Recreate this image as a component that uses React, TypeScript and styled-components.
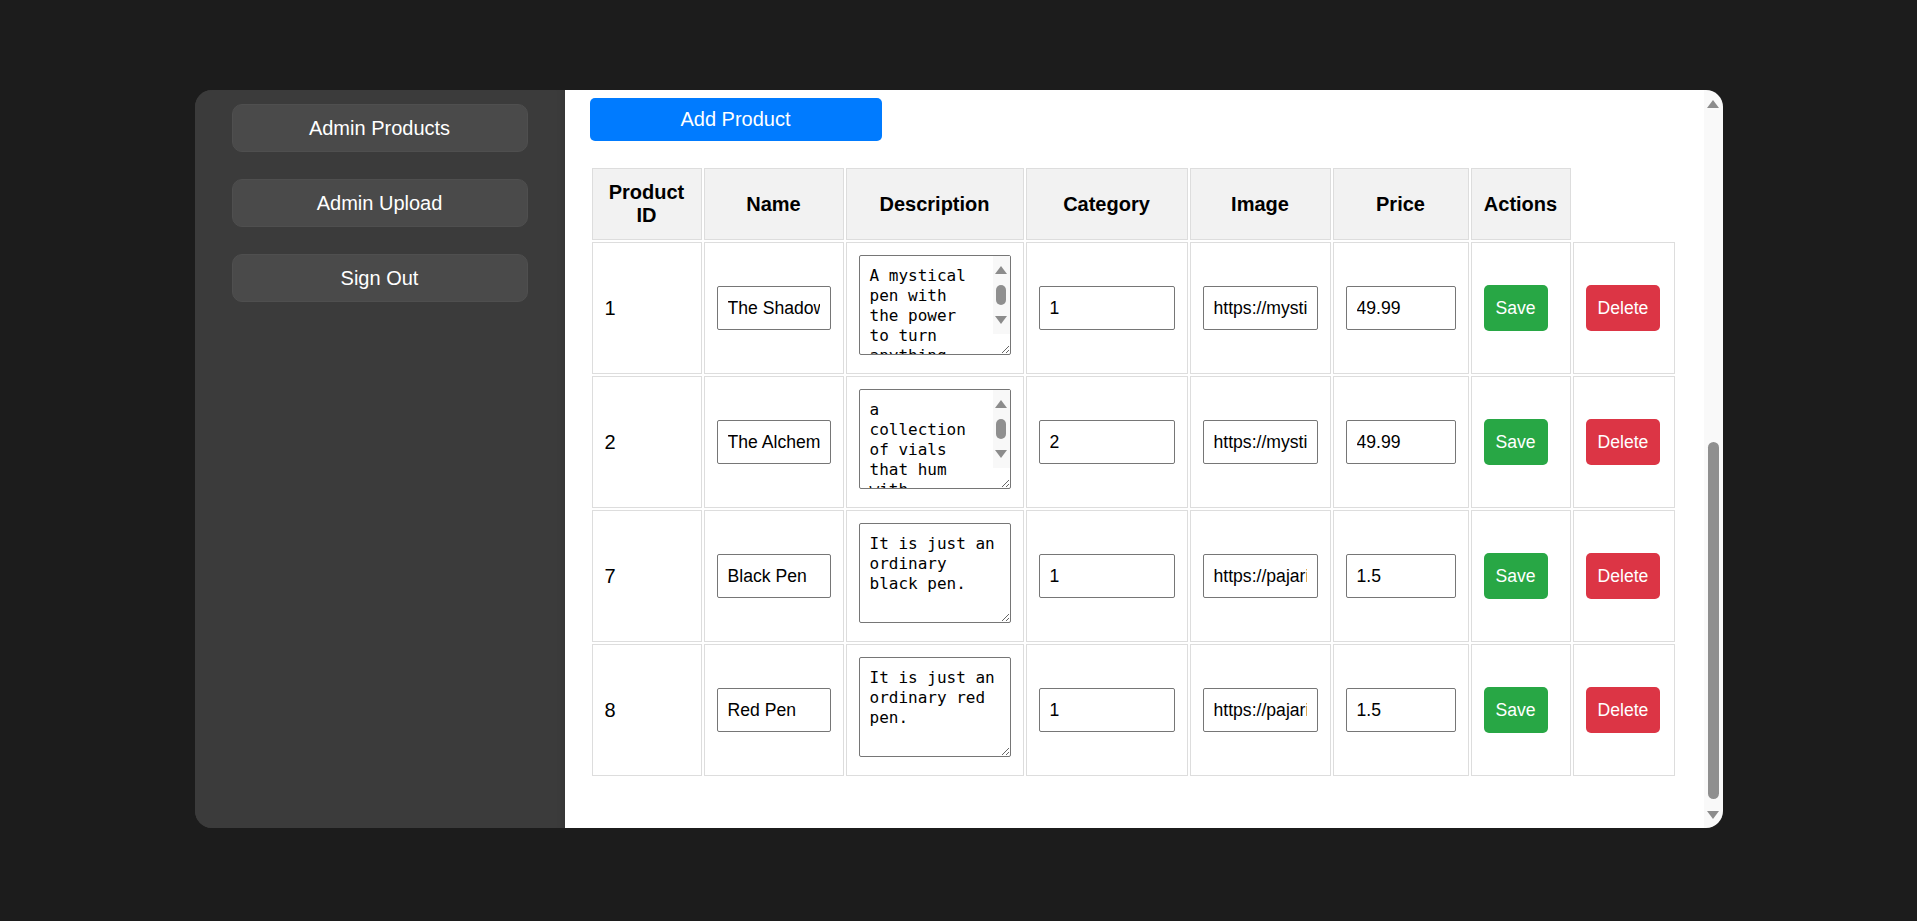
import React from "react";
import styled, { createGlobalStyle } from "styled-components";

const GlobalStyle = createGlobalStyle`
  html, body {
    margin: 0;
    padding: 0;
    background: #1c1c1c;
    font-family: "Liberation Sans", Arial, sans-serif;
  }
  * { box-sizing: border-box; }
`;

const Page = styled.div`
  height: 921px;
  display: flex;
  align-items: flex-start;
  justify-content: center;
  padding-top: 90px;
`;

const Shell = styled.div`
  width: 1528px;
  height: 738px;
  display: flex;
  border-radius: 17px;
  overflow: hidden;
  background: #3b3b3b;
`;

const Sidebar = styled.nav`
  width: 370px;
  flex-shrink: 0;
  background: #3b3b3b;
  display: flex;
  flex-direction: column;
  align-items: center;
  padding-top: 14px;
  gap: 27px;
  box-shadow: inset -8px 0 6px -6px rgba(0, 0, 0, 0.12);
`;

const NavButton = styled.button`
  width: 296px;
  height: 48px;
  background: #4a4a4a;
  border: 1px solid #4f4f4f;
  border-radius: 10px;
  color: #ffffff;
  font-family: "Liberation Sans", Arial, sans-serif;
  font-size: 20px;
  cursor: pointer;
`;

const Main = styled.main`
  flex: 1;
  background: #ffffff;
  overflow: hidden;
  padding: 8px 25px 0 25px;
`;

/* Drawn scrollbar of the main panel (scrolled to its end) */
const ScrollRail = styled.div`
  width: 19px;
  flex-shrink: 0;
  background: #f9f9f9;
  display: flex;
  flex-direction: column;
  align-items: center;
`;

const RailArrowBox = styled.div`
  height: 27px;
  width: 100%;
  display: flex;
  align-items: center;
  justify-content: center;
`;

const Triangle = styled.span<{ $dir: "up" | "down"; $w?: number; $h?: number }>`
  display: block;
  width: 0;
  height: 0;
  border-left: ${(p) => (p.$w ?? 12) / 2}px solid transparent;
  border-right: ${(p) => (p.$w ?? 12) / 2}px solid transparent;
  ${(p) =>
    p.$dir === "up"
      ? `border-bottom: ${p.$h ?? 8}px solid #8c8c8c;`
      : `border-top: ${p.$h ?? 8}px solid #8c8c8c;`}
`;

const RailTrack = styled.div`
  flex: 1;
  width: 100%;
  display: flex;
  flex-direction: column;
  align-items: center;
  padding-bottom: 2px;
`;

const RailThumb = styled.div`
  margin-top: auto;
  width: 11px;
  height: 357px;
  border-radius: 6px;
  background: #8f8f8f;
`;

const AddButton = styled.button`
  display: block;
  width: 292px;
  height: 43px;
  background: #007bff;
  color: #ffffff;
  border: none;
  border-radius: 5px;
  font-family: "Liberation Sans", Arial, sans-serif;
  font-size: 20px;
  margin-bottom: 25px;
  cursor: pointer;
`;

const Table = styled.table`
  border-collapse: separate;
  border-spacing: 2px;
  table-layout: fixed;
  width: 1087px;
  font-size: 20px;
  color: #000;
`;

const Th = styled.th`
  border: 1px solid #dddddd;
  background: #f2f2f2;
  padding: 12px;
  font-weight: bold;
  text-align: center;
  line-height: 23px;
`;

const Td = styled.td`
  border: 1px solid #dddddd;
  padding: 12px;
  text-align: left;
  vertical-align: middle;
`;

const TextInput = styled.input`
  width: 100%;
  height: 44px;
  padding: 10px;
  border: 1px solid #767676;
  border-radius: 2px;
  font-family: "Liberation Sans", Arial, sans-serif;
  font-size: 17.6px;
  color: #000;
  background: #fff;
`;

const DescBox = styled.div`
  position: relative;
`;

const DescArea = styled.textarea<{ $scrolls: boolean }>`
  width: 100%;
  height: 100px;
  padding: 10px ${(p) => (p.$scrolls ? 27 : 10)}px 10px 10px;
  border: 1px solid #767676;
  border-radius: 2px;
  font-family: "DejaVu Sans Mono", "Liberation Mono", monospace;
  font-size: 16px;
  line-height: 20px;
  color: #000;
  background: #fff;
  margin-bottom: 1px;
  overflow: hidden;
`;

/* Drawn scrollbar of an overflowing textarea */
const AreaRail = styled.div`
  position: absolute;
  top: 1px;
  right: 1px;
  width: 17px;
  height: 78px;
  background: #f8f8f8;
  display: flex;
  flex-direction: column;
  align-items: center;
  padding-top: 10px;
  pointer-events: none;
`;

const AreaThumb = styled.div`
  width: 10px;
  height: 20px;
  border-radius: 5px;
  background: #8f8f8f;
  margin: 11px 0;
`;

const ActionButton = styled.button<{ $variant: "save" | "delete" }>`
  height: 46px;
  padding: 0 12px;
  border: none;
  border-radius: 5px;
  color: #ffffff;
  font-family: "Liberation Sans", Arial, sans-serif;
  font-size: 17.6px;
  background: ${(p) => (p.$variant === "save" ? "#28a745" : "#dc3545")};
  cursor: pointer;
`;

type Product = {
  id: number;
  name: string;
  description: string;
  category: string;
  image: string;
  price: string;
  longText: boolean;
};

const products: Product[] = [
  {
    id: 1,
    name: "The Shadow Quill",
    description:
      "A mystical pen with the power to turn anything you write into reality.",
    category: "1",
    image: "https://mysticalshop.com/images/shadow-quill.png",
    price: "49.99",
    longText: true,
  },
  {
    id: 2,
    name: "The Alchemist's Vials",
    description:
      "a collection of vials that hum with ancient alchemical energy.",
    category: "2",
    image: "https://mysticalshop.com/images/alchemist-vials.png",
    price: "49.99",
    longText: true,
  },
  {
    id: 7,
    name: "Black Pen",
    description: "It is just an ordinary black pen.",
    category: "1",
    image: "https://pajaritoshop.com/images/black-pen.png",
    price: "1.5",
    longText: false,
  },
  {
    id: 8,
    name: "Red Pen",
    description: "It is just an ordinary red pen.",
    category: "1",
    image: "https://pajaritoshop.com/images/red-pen.png",
    price: "1.5",
    longText: false,
  },
];

const colWidths = [110, 140, 178, 162, 141, 136, 100, 102];

export default function App() {
  return (
    <>
      <GlobalStyle />
      <Page>
        <Shell>
          <Sidebar>
            <NavButton>Admin Products</NavButton>
            <NavButton>Admin Upload</NavButton>
            <NavButton>Sign Out</NavButton>
          </Sidebar>
          <Main>
            <AddButton>Add Product</AddButton>
            <Table>
              <colgroup>
                {colWidths.map((w, i) => (
                  <col key={i} style={{ width: w }} />
                ))}
              </colgroup>
              <thead>
                <tr>
                  <Th>Product ID</Th>
                  <Th>Name</Th>
                  <Th>Description</Th>
                  <Th>Category</Th>
                  <Th>Image</Th>
                  <Th>Price</Th>
                  <Th>Actions</Th>
                </tr>
              </thead>
              <tbody>
                {products.map((p) => (
                  <tr key={p.id}>
                    <Td>{p.id}</Td>
                    <Td>
                      <TextInput defaultValue={p.name} />
                    </Td>
                    <Td>
                      <DescBox>
                        <DescArea
                          $scrolls={p.longText}
                          defaultValue={p.description}
                        />
                        {p.longText && (
                          <AreaRail>
                            <Triangle $dir="up" $w={12} $h={8} />
                            <AreaThumb />
                            <Triangle $dir="down" $w={12} $h={8} />
                          </AreaRail>
                        )}
                      </DescBox>
                    </Td>
                    <Td>
                      <TextInput defaultValue={p.category} />
                    </Td>
                    <Td>
                      <TextInput defaultValue={p.image} />
                    </Td>
                    <Td>
                      <TextInput defaultValue={p.price} />
                    </Td>
                    <Td>
                      <ActionButton $variant="save">Save</ActionButton>
                    </Td>
                    <Td>
                      <ActionButton $variant="delete">Delete</ActionButton>
                    </Td>
                  </tr>
                ))}
              </tbody>
            </Table>
          </Main>
          <ScrollRail>
            <RailArrowBox>
              <Triangle $dir="up" $w={12} $h={8} />
            </RailArrowBox>
            <RailTrack>
              <RailThumb />
            </RailTrack>
            <RailArrowBox>
              <Triangle $dir="down" $w={12} $h={8} />
            </RailArrowBox>
          </ScrollRail>
        </Shell>
      </Page>
    </>
  );
}
